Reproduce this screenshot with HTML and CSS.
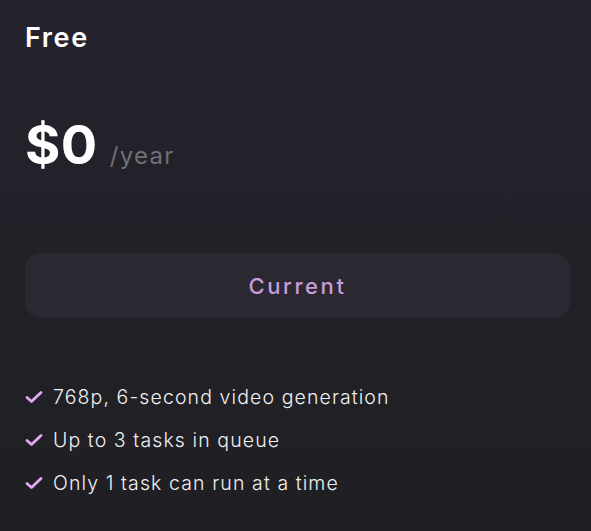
FILE: index.html
```html
<!DOCTYPE html>
<html>
<head>
<meta charset="utf-8">
<link rel="stylesheet" href="styles.css">
</head>
<body>
<div class="card">
  <h2 class="plan">Free</h2>
  <div class="price"><span class="amount">$0</span><span class="period">/year</span></div>
  <button class="btn">Current</button>
  <ul class="features">
    <li><svg class="check" viewBox="0 0 18 14" width="18" height="14"><path d="M2 7.5 L6.5 11.5 L16 2.5" fill="none" stroke="#e3a8f2" stroke-width="2.8" stroke-linecap="round" stroke-linejoin="round"/></svg><span>768p, 6-second video generation</span></li>
    <li><svg class="check" viewBox="0 0 18 14" width="18" height="14"><path d="M2 7.5 L6.5 11.5 L16 2.5" fill="none" stroke="#e3a8f2" stroke-width="2.8" stroke-linecap="round" stroke-linejoin="round"/></svg><span>Up to 3 tasks in queue</span></li>
    <li><svg class="check" viewBox="0 0 18 14" width="18" height="14"><path d="M2 7.5 L6.5 11.5 L16 2.5" fill="none" stroke="#e3a8f2" stroke-width="2.8" stroke-linecap="round" stroke-linejoin="round"/></svg><span>Only 1 task can run at a time</span></li>
  </ul>
</div>
</body>
</html>
```
FILE: styles.css
```css
html, body {
  margin: 0;
  padding: 0;
  height: 100%;
}
body {
  background: linear-gradient(180deg, #25232d 0%, #1f1f23 100%);
  font-family: Inter, "Noto Sans", sans-serif;
  color: #ffffff;
}
.card {
  padding: 20px 21px 0 25px;
  display: flex;
  flex-direction: column;
}
.plan {
  margin: 0;
  font-size: 27px;
  font-weight: 600;
  line-height: 36px;
  letter-spacing: 1.6px;
}
.price {
  margin-top: 49px;
  display: flex;
  align-items: baseline;
  gap: 12px;
  height: 80px;
}
.amount {
  font-size: 54px;
  font-weight: 700;
  line-height: 80px;
  letter-spacing: 0.5px;
}
.period {
  font-size: 24px;
  color: #707075;
  letter-spacing: 1.3px;
}
.btn {
  margin-top: 68px;
  height: 65px;
  border: none;
  border-radius: 16px;
  background: #2b2832;
  color: #c79cdb;
  font-family: Inter, "Noto Sans", sans-serif;
  font-size: 22px;
  font-weight: 500;
  letter-spacing: 2.6px;
  cursor: pointer;
}
.features {
  list-style: none;
  margin: 66px 0 0 0;
  padding: 0;
  display: flex;
  flex-direction: column;
  gap: 17px;
}
.features li {
  display: flex;
  align-items: center;
  gap: 10px;
  font-size: 19.5px;
  line-height: 26px;
  color: #f0f0f2;
  font-weight: 300;
  letter-spacing: 1.1px;
}
.check {
  flex: none;
}
```
